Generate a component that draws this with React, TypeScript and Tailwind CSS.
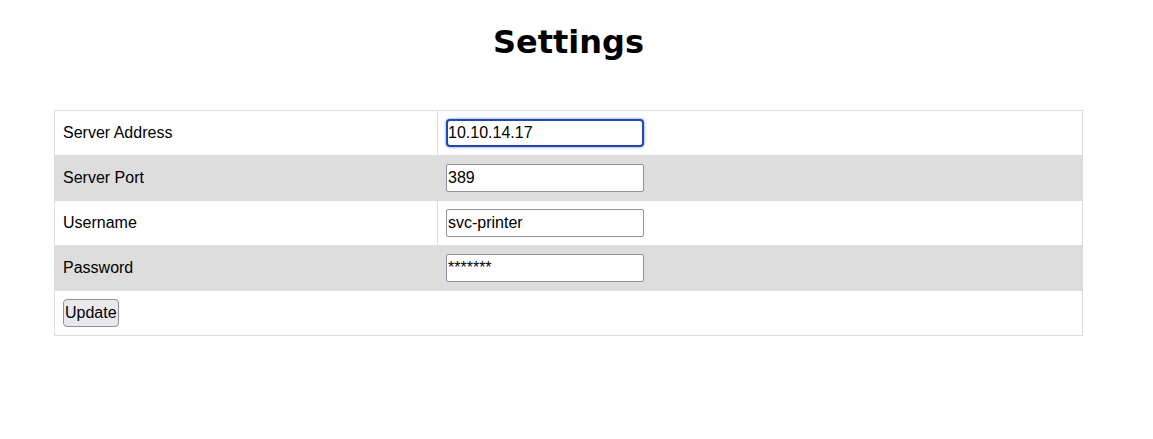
import React from "react";

const rows = [
  { label: "Server Address", value: "10.10.14.17", focused: true },
  { label: "Server Port", value: "389" },
  { label: "Username", value: "svc-printer" },
  { label: "Password", value: "*******" },
];

const App = () => {
  return (
    <div className="min-h-screen bg-white font-['Liberation_Sans',Arial,sans-serif] text-black">
      <div className="ml-[54px] w-[1029px]">
        <h1 className="pt-[24px] text-center font-['DejaVu_Sans',sans-serif] text-[32px] font-bold leading-[37px]">
          Settings
        </h1>

        <div className="mt-[49px] border border-[#dddddd]">
          {rows.map((row, index) => (
            <div
              key={row.label}
              className={`flex ${index === 0 ? "h-[44px]" : "h-[45px] border-t border-[#dddddd]"} ${
                index % 2 === 1 ? "bg-[#dddddd]" : "bg-white"
              }`}
            >
              <div className="flex w-[383px] items-center border-r border-[#dddddd] pl-[8px] text-[16px]">
                {row.label}
              </div>
              <div className="flex flex-1 items-center pl-[8px]">
                <input
                  type="text"
                  defaultValue={row.value}
                  readOnly
                  className={`h-[28px] w-[198px] bg-white font-['Liberation_Sans',Arial,sans-serif] text-[16px] text-black outline-none ${
                    row.focused
                      ? "rounded-[4px] border-2 border-[#2447a8] px-0 shadow-[0_0_2px_1px_rgba(110,150,255,0.55)]"
                      : "rounded-[2px] border border-[#8f8f9d] px-[1px]"
                  }`}
                />
              </div>
            </div>
          ))}
          <div className="flex h-[45px] items-center border-t border-[#dddddd] bg-white pl-[8px]">
            <button className="h-[28px] rounded-[4px] border border-[#8f8f9d] bg-[#e9e9ed] px-[1px] text-[16px] text-black">
              Update
            </button>
          </div>
        </div>
      </div>
    </div>
  );
};

export default App;
